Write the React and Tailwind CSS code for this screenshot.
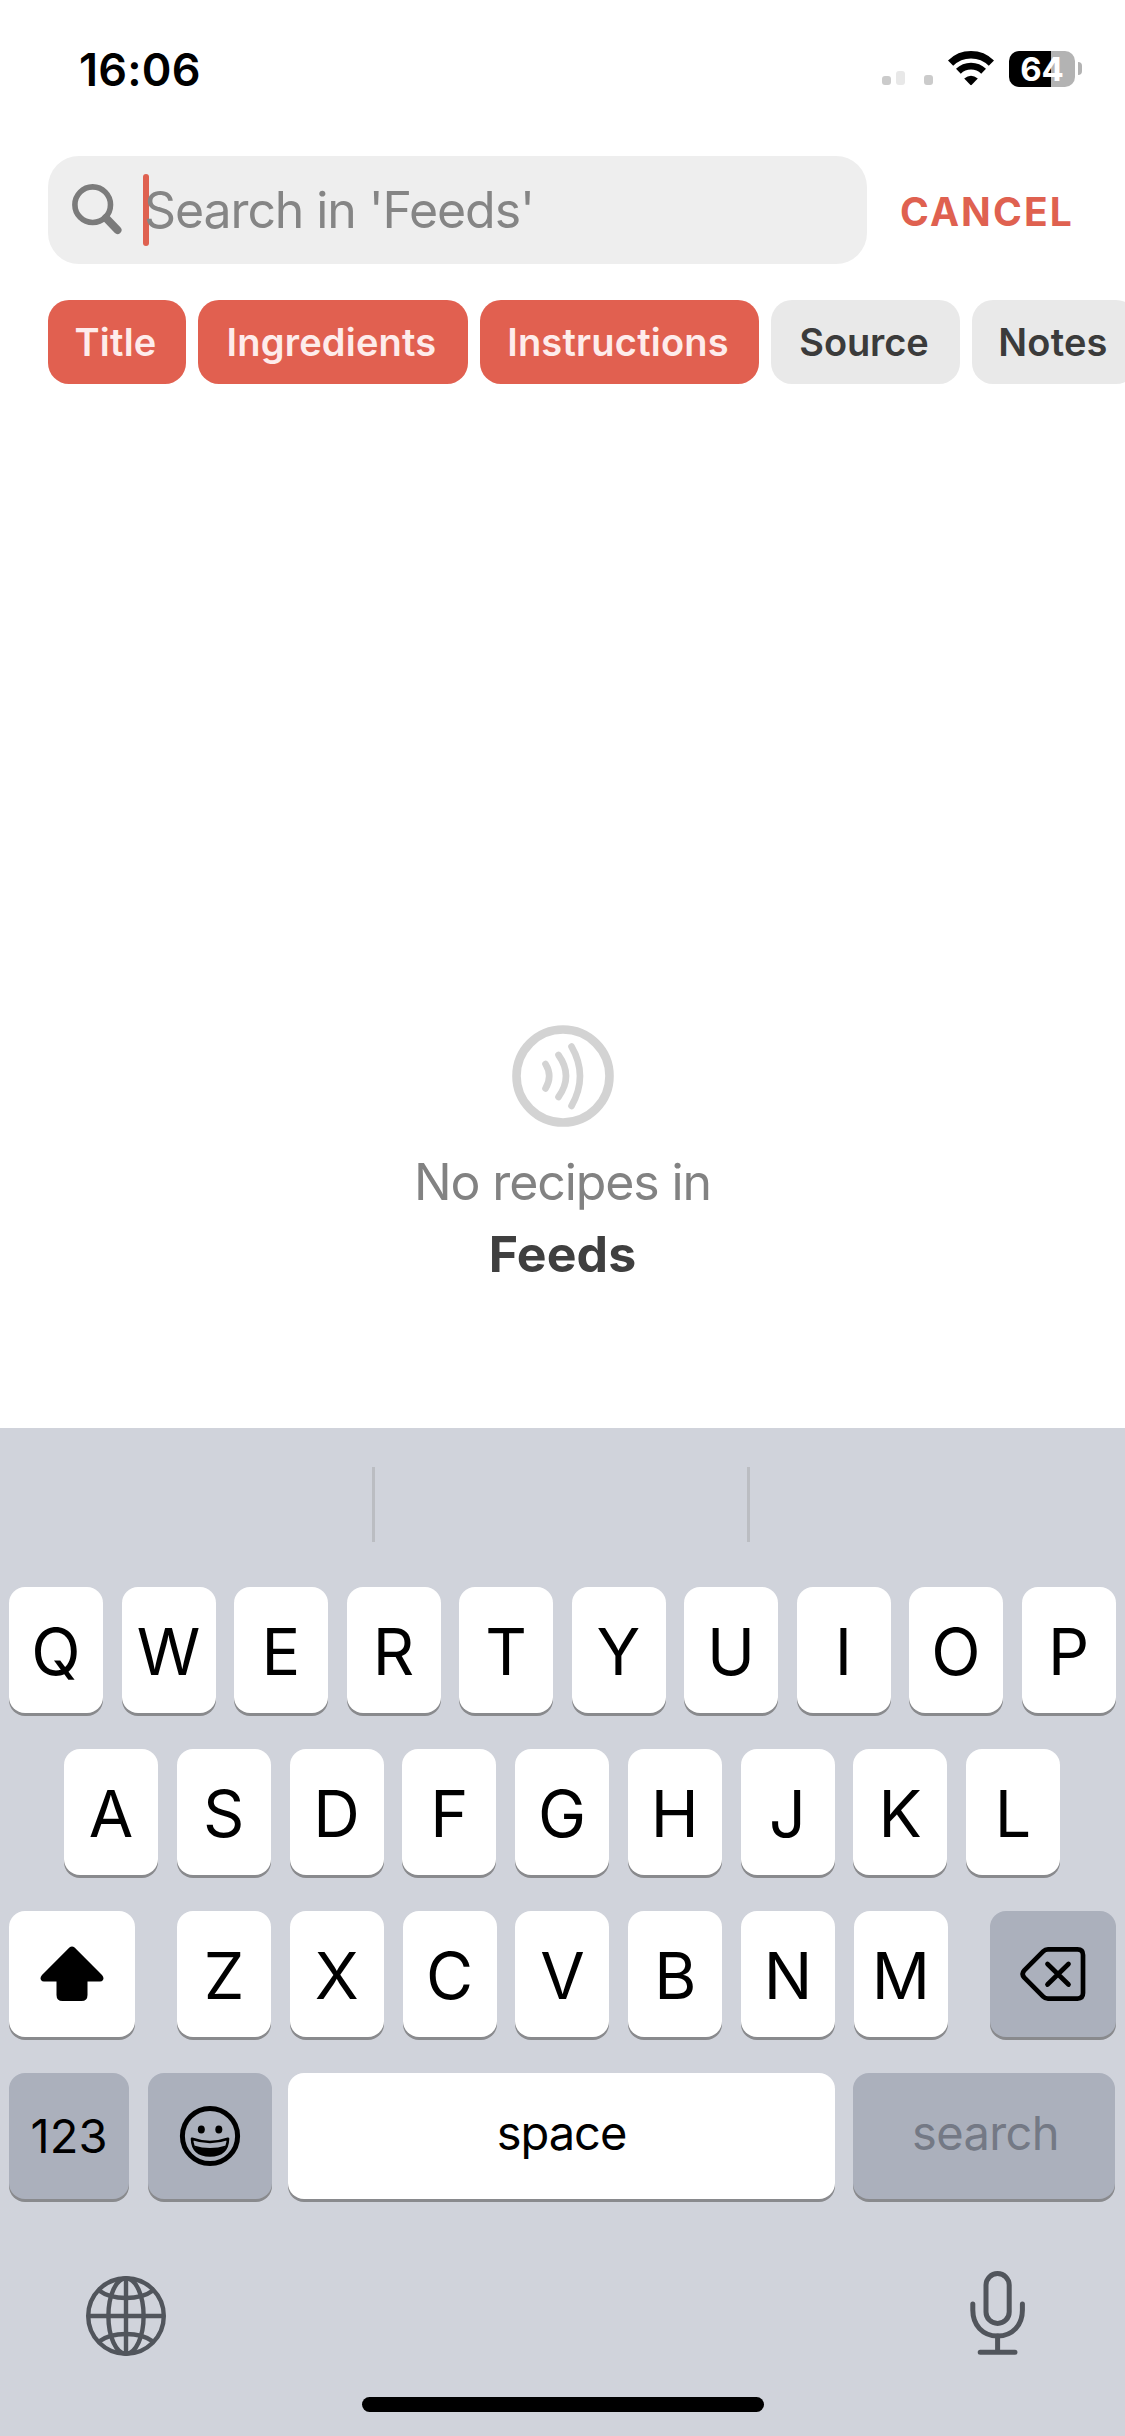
import React from "react";

const chips = [
  { label: "Title", active: true, width: "w-[138px]", tracking: "tracking-[0.2px]" },
  { label: "Ingredients", active: true, width: "w-[270px]", tracking: "tracking-[0.2px]" },
  { label: "Instructions", active: true, width: "w-[279px]", tracking: "tracking-[0.2px]" },
  { label: "Source", active: false, width: "w-[189px]", tracking: "tracking-[-0.1px]" },
  { label: "Notes", active: false, width: "w-[165px]", tracking: "tracking-[0.2px]" },
];

function StatusBar() {
  return (
    <div className="flex h-[156px] items-start justify-between pl-[79px] pr-[43px]">
      <span className="mt-[43px] text-[45px] leading-[54px] font-semibold tracking-[0.2px] text-black">16:06</span>
      <div className="mt-[51px] flex h-[36px] items-start">
        <svg width="51" height="34" viewBox="0 0 51 34" className="mr-[15px]">
          <rect x="0" y="25" width="9" height="9" rx="3" fill="#cbcbcb" />
          <rect x="14" y="20" width="9" height="14" rx="3" fill="#e8e8e8" />
          <rect x="42" y="24" width="9" height="10" rx="3" fill="#cbcbcb" />
        </svg>
        <svg width="46" height="36" viewBox="0 0 46 36" className="mr-[15px]" fill="none" stroke="#000">
          <path d="M2.6 12.2 A29 29 0 0 1 43.4 12.2" strokeWidth="7.4" />
          <path d="M10.4 20.2 A18 18 0 0 1 35.6 20.2" strokeWidth="6.8" />
          <path d="M16.2 27.6 Q23 22 29.8 27.6 L23.8 33.8 Q23 34.5 22.2 33.8 Z" fill="#000" stroke="none" />
        </svg>
        <div className="flex h-[36px] w-[66px] items-center justify-center rounded-[10px] bg-[linear-gradient(to_right,#000_42px,#b3b3b3_42px)]">
          <span className="text-[33px] leading-[36px] font-bold text-white">64</span>
        </div>
        <div className="mt-[11px] ml-[3px] h-[13px] w-[4px] rounded-r-full bg-[#b3b3b3]" />
      </div>
    </div>
  );
}

function SearchRow() {
  return (
    <div className="flex h-[108px] items-center pl-12">
      <div className="flex h-[108px] w-[819px] items-center rounded-[31px] bg-[#eeeeee]">
        <svg width="52" height="52" viewBox="0 0 52 52" className="ml-6 -mt-px" fill="none" stroke="#7b7b7b">
          <circle cx="20.7" cy="20.7" r="17.8" strokeWidth="5.6" />
          <path d="M34 34 L45.5 46" strokeWidth="8" strokeLinecap="round" />
        </svg>
        <div className="ml-[19px] h-[72px] w-[6px] rounded-full bg-[#df6150]" />
        <span className="-ml-[5px] text-[50px] leading-[60px] tracking-[-1.1px] text-[#858585]">
          Search in 'Feeds'
        </span>
      </div>
      <span className="mt-[3px] ml-[33px] text-[39px] leading-[48px] font-bold tracking-[2.1px] text-[#df6150]">CANCEL</span>
    </div>
  );
}

function Chips() {
  return (
    <div className="mt-9 flex gap-3 pl-12">
      {chips.map((c) => (
        <div
          key={c.label}
          className={`flex h-[84px] shrink-0 items-center justify-center rounded-[21px] pr-[3px] text-[38px] font-semibold ${c.width} ${c.tracking} ${
            c.active ? "bg-[#e16050] text-[#feeceb]" : "bg-[#e9e9e9] text-[#3b3b3b]"
          }`}
        >
          {c.label}
        </div>
      ))}
    </div>
  );
}

function EmptyState() {
  return (
    <div className="mt-[641px] flex flex-col items-center">
      <svg width="102" height="102" viewBox="0 0 102 102" fill="none" stroke="#d3d3d3" strokeLinecap="round">
        <circle cx="51" cy="51" r="46.5" strokeWidth="8.6" />
        <g strokeWidth="6.6">
          <path d="M33.5 39 Q41 51 33.5 63.5" />
          <path d="M46.5 30 Q61.5 51 46.5 72" />
          <path d="M59.5 21.5 Q76.5 51 59.5 81" />
        </g>
      </svg>
      <p className="mt-[19px] text-[50px] leading-[72px] tracking-[-1.1px] text-[#828282]">No recipes in</p>
      <p className="text-[50px] leading-[72px] font-bold tracking-[0.1px] text-[#3f3f3f]">Feeds</p>
    </div>
  );
}

function Key({ children, dark = false, className = "w-[94px]" }) {
  return (
    <div
      className={`flex h-[126px] shrink-0 items-center justify-center rounded-[16px] shadow-[0_3px_0_#898a8d] ${
        dark ? "bg-[#abb0bc]" : "bg-white"
      } ${className}`}
    >
      {children}
    </div>
  );
}

function Letters({ row }) {
  return row.split("").map((l) => (
    <Key key={l}>
      <span className="mt-[4px] text-[64.5px] leading-[76px] text-black">{l}</span>
    </Key>
  ));
}

function Keyboard() {
  return (
    <div className="flex h-[1008px] flex-col bg-[#d0d3db]">
      <div className="flex h-[159px] pt-[39px] pl-[372px]">
        <div className="h-[75px] w-[3px] bg-[#bbbdc2]" />
        <div className="ml-[372px] h-[75px] w-[3px] bg-[#bbbdc2]" />
      </div>
      <div className="flex justify-between pr-[9.5px] pl-[9px]">
        <Letters row="QWERTYUIOP" />
      </div>
      <div className="mt-9 flex justify-between pr-[65px] pl-[64px]">
        <Letters row="ASDFGHJKL" />
      </div>
      <div className="mt-9 flex justify-between px-[9px]">
        <Key className="w-[126px]">
          <svg width="64" height="56" viewBox="0 0 64 56" className="-mt-px -ml-px">
            <path
              d="M29.4 1.6 Q32 -0.4 34.6 1.6 L62 29 Q64.5 32 62.8 34.3 Q62 35.6 60 35.6 H47.5 V49 Q47.5 55 41.5 55 H22.5 Q16.5 55 16.5 49 V35.6 H4 Q2 35.6 1.2 34.3 Q-0.5 32 2 29 Z"
              fill="#000"
            />
          </svg>
        </Key>
        <div className="flex w-[771px] justify-between">
          <Letters row="ZXCVBNM" />
        </div>
        <Key dark className="w-[126px]">
          <svg width="66" height="54" viewBox="0 0 66 54" className="-mt-px" fill="none" stroke="#000" strokeWidth="4.7" strokeLinecap="round" strokeLinejoin="round">
            <path d="M28 2.4 H57.5 Q63 2.4 63 7.9 V46.1 Q63 51.6 57.5 51.6 H28 Q25.2 51.6 23.2 49.6 L4.3 30.6 Q1 27 4.3 23.4 L23.2 4.4 Q25.2 2.4 28 2.4 Z" />
            <path d="M27.5 17 L48.5 37.5 M48.5 17 L27.5 37.5" />
          </svg>
        </Key>
      </div>
      <div className="mt-9 flex pl-[9px]">
        <Key dark className="w-[120px]">
          <span className="text-[47px] leading-[54px] tracking-[0.1px] text-black">123</span>
        </Key>
        <Key dark className="ml-[19px] w-[124px]">
          <svg width="62" height="62" viewBox="0 0 62 62" className="-ml-px" fill="none" stroke="#000">
            <circle cx="31" cy="31" r="27.6" strokeWidth="5" />
            <ellipse cx="22.3" cy="24.5" rx="3.5" ry="4" fill="#000" stroke="none" />
            <ellipse cx="39.8" cy="24.5" rx="3.5" ry="4" fill="#000" stroke="none" />
            <path d="M13 33.8 Q31 40.2 49 33.8 Q48.5 50.5 31 50.5 Q13.5 50.5 13 33.8 Z" strokeWidth="2.6" strokeLinejoin="round" />
            <path d="M15 40.5 Q31 45.6 47 40.5 Q43 50.5 31 50.5 Q19 50.5 15 40.5 Z" fill="#000" stroke="none" />
          </svg>
        </Key>
        <Key className="ml-4 w-[547px]">
          <span className="-mt-[7px] text-[47px] leading-[56px] tracking-[-1px] text-black">space</span>
        </Key>
        <Key dark className="ml-[18px] w-[262px]">
          <span className="-mt-[7px] ml-[3px] text-[47px] leading-[56px] tracking-[-0.6px] text-[#747985]">search</span>
        </Key>
      </div>
      <div className="mt-[72px] flex items-start justify-between pr-[98px] pl-[85px]">
        <svg width="82" height="82" viewBox="0 0 82 82" className="mt-[4px]" fill="none" stroke="#51555c" strokeWidth="4.4">
          <circle cx="41" cy="41" r="37.8" />
          <ellipse cx="41" cy="41" rx="17.6" ry="37.8" />
          <path d="M41 3 V79 M3 41 H79" />
          <path d="M14 15.5 Q24 23 41 23 Q58 23 68 15.5" />
          <path d="M14 66.5 Q24 59 41 59 Q58 59 68 66.5" />
        </svg>
        <svg width="58" height="86" viewBox="0 0 58 86" fill="none" stroke="#51555c" strokeWidth="5" strokeLinecap="round">
          <rect x="17" y="2.5" width="23.2" height="50" rx="11.6" />
          <path d="M3.8 33 V39 C3.8 54 13.5 65 28.6 65 C43.7 65 53.4 54 53.4 39 V33" />
          <path d="M28.6 65 V81 M11.2 81.3 H46" />
        </svg>
      </div>
      <div className="mt-[40px] ml-[362px] h-[15px] w-[402px] rounded-full bg-black" />
    </div>
  );
}

export default function App() {
  return (
    <div className="h-[2436px] w-[1125px] overflow-hidden bg-white font-['Inter',sans-serif] whitespace-nowrap">
      <div className="h-[1428px] overflow-hidden">
        <StatusBar />
        <SearchRow />
        <Chips />
        <EmptyState />
      </div>
      <Keyboard />
    </div>
  );
}
